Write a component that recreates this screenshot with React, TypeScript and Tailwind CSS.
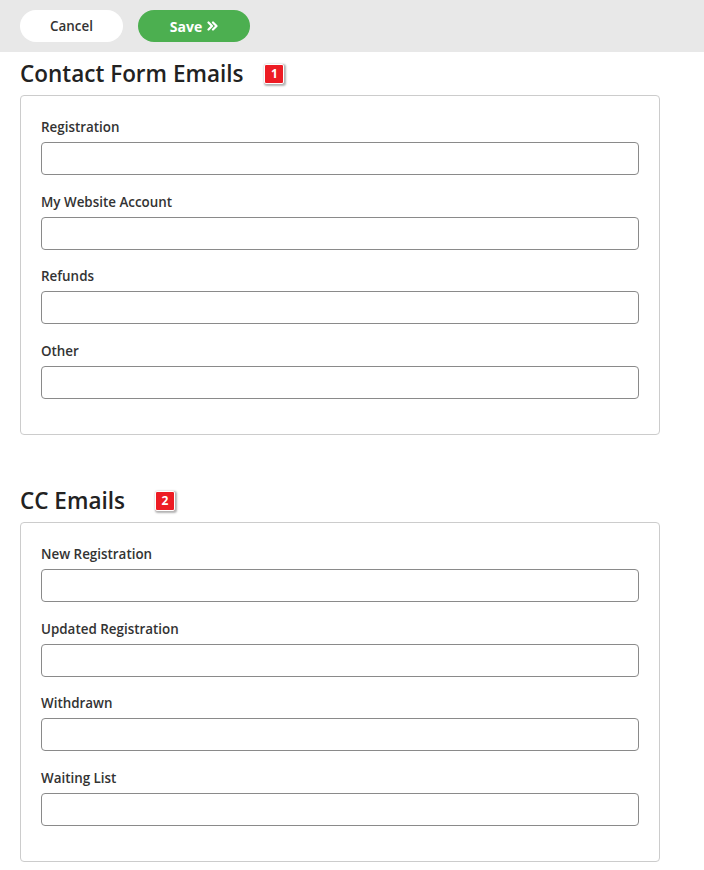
import React from "react";

const font = { fontFamily: '"Open Sans", "Noto Sans", "Liberation Sans", sans-serif' };

function Badge({ n }: { n: string }) {
  return (
    <span className="inline-flex h-[20px] w-[20px] items-center justify-center rounded-[2px] border border-white bg-[#ed1c24] text-[12px] font-bold leading-none text-white shadow-[1px_1px_2px_1px_rgba(0,0,0,0.3)]">
      {n}
    </span>
  );
}

function Field({ label }: { label: string }) {
  return (
    <div className="flex flex-col">
      <label className="h-[20px] text-[13.4px] font-semibold leading-[20px] text-[#333]">{label}</label>
      <input
        type="text"
        className="mt-[5px] h-[33px] w-full rounded-[4px] border border-[#8a8a8a] bg-white px-2 outline-none"
      />
    </div>
  );
}

function Section({ title, badge, badgeGap, fields }: { title: string; badge: string; badgeGap: string; fields: string[] }) {
  return (
    <section>
      <div className="flex h-[26px] items-start">
        <h2 className="text-[22.5px] font-semibold leading-[26px] text-[#222]">{title}</h2>
        <span className={`${badgeGap} -mt-[1px]`}>
          <Badge n={badge} />
        </span>
      </div>
      <div className="mt-[8px] w-[640px] rounded-[4px] border border-[#cccccc] px-[20px] pb-[35px] pt-[21px]">
        <div className="flex flex-col gap-[16.67px]">
          {fields.map((f) => (
            <Field key={f} label={f} />
          ))}
        </div>
      </div>
    </section>
  );
}

export default function App() {
  return (
    <div className="min-h-[870px] bg-white" style={font}>
      <div className="flex h-[52px] items-center gap-[15px] bg-[#e8e8e8] px-[20px]">
        <button className="h-[32px] w-[103px] rounded-full bg-white text-[13.4px] font-semibold text-[#333]">Cancel</button>
        <button className="flex h-[32px] w-[112px] items-center justify-center gap-[5px] rounded-full bg-[#4caf50] text-[14px] font-bold text-white">
          Save
          <svg width="11" height="10" viewBox="0 0 11 10" fill="none" stroke="white" strokeWidth="2.2" strokeLinecap="round" strokeLinejoin="round">
            <path d="M1.5 1.5 L5 5 L1.5 8.5" />
            <path d="M6 1.5 L9.5 5 L6 8.5" />
          </svg>
        </button>
      </div>
      <div className="px-[20px] pt-[9px]">
        <Section
          title="Contact Form Emails"
          badge="1"
          badgeGap="ml-[21px]"
          fields={["Registration", "My Website Account", "Refunds", "Other"]}
        />
        <div className="h-[53px]" />
        <Section
          title="CC Emails"
          badge="2"
          badgeGap="ml-[30px]"
          fields={["New Registration", "Updated Registration", "Withdrawn", "Waiting List"]}
        />
      </div>
    </div>
  );
}
